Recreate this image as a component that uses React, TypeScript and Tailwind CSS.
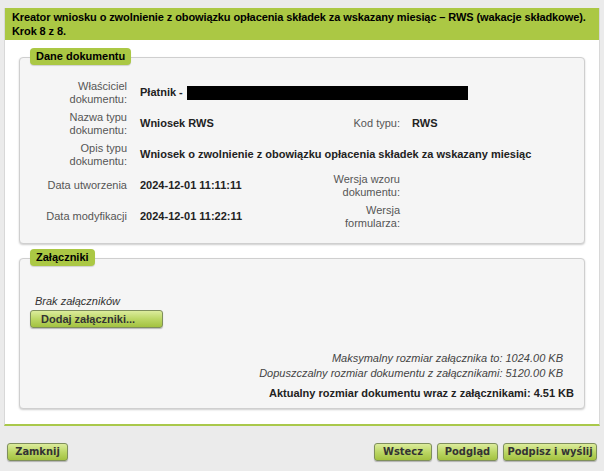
const btn =
  "h-[18px] rounded-[3px] border border-[#7f8f5c] bg-gradient-to-b from-[#dcec9c] via-[#bcd765] to-[#a3c23f] shadow-[0_1px_1px_rgba(0,0,0,0.25)] text-[11px] font-bold text-[#333] leading-[16px]";

function Legend({ children }: { children: React.ReactNode }) {
  return (
    <div className="-mt-[10px] ml-[10px] w-fit rounded-[4px] bg-[#abc844] px-[6px] h-[17px] leading-[17px] text-[11px] font-bold text-black shadow-[0_1px_1px_rgba(0,0,0,0.15)]">
      {children}
    </div>
  );
}

function Row({
  label,
  value,
  rlabel,
  rvalue,
  wide,
}: {
  label: React.ReactNode;
  value?: React.ReactNode;
  rlabel?: React.ReactNode;
  rvalue?: React.ReactNode;
  wide?: boolean;
}) {
  return (
    <div className="flex h-[31px] items-center">
      <div className="w-[107px] text-right text-[#555] leading-[13px]">{label}</div>
      <div className={`ml-[13px] font-bold text-[#222] ${wide ? "" : "w-[160px]"}`}>{value}</div>
      {!wide && (
        <>
          <div className="w-[100px] text-right text-[#555] leading-[13px]">{rlabel}</div>
          <div className="ml-[12px] font-bold text-[#222]">{rvalue}</div>
        </>
      )}
    </div>
  );
}

export default function App() {
  return (
    <div
      className="min-h-screen bg-[#ebebeb] pt-[8px] px-[4px] text-[11px] text-[#222]"
      style={{ fontFamily: '"Liberation Sans", Arial, sans-serif' }}
    >
      <div className="border-x border-[#d8d8d8] border-b-2 border-b-[#a9c84a] bg-white">
        <div className="bg-[#abc844] px-[7px] py-[2px] text-[11px] font-bold leading-[14px] tracking-[-0.1px] text-black whitespace-nowrap">
          Kreator wniosku o zwolnienie z obowiązku opłacenia składek za wskazany miesiąc – RWS (wakacje składkowe).
          <br />
          Krok 8 z 8.
        </div>

        <div className="px-[14px] pt-[17px] pb-[15px]">
          {/* Dane dokumentu */}
          <div className="rounded-[4px] border border-[#cfcfcf] bg-[#f5f5f5] pb-[11px] shadow-[0_1px_2px_rgba(0,0,0,0.2)]">
            <Legend>Dane dokumentu</Legend>
            <div className="mt-[12px]">
              <Row
                wide
                label={
                  <>
                    Właściciel
                    <br />
                    dokumentu:
                  </>
                }
                value={
                  <span className="flex items-center">
                    Płatnik -<span className="ml-[4px] inline-block h-[14px] w-[281px] bg-black" />
                  </span>
                }
              />
              <Row
                label={
                  <>
                    Nazwa typu
                    <br />
                    dokumentu:
                  </>
                }
                value="Wniosek RWS"
                rlabel="Kod typu:"
                rvalue="RWS"
              />
              <Row
                wide
                label={
                  <>
                    Opis typu
                    <br />
                    dokumentu:
                  </>
                }
                value="Wniosek o zwolnienie z obowiązku opłacenia składek za wskazany miesiąc"
              />
              <Row
                label="Data utworzenia"
                value="2024-12-01 11:11:11"
                rlabel={
                  <>
                    Wersja wzoru
                    <br />
                    dokumentu:
                  </>
                }
              />
              <Row
                label="Data modyfikacji"
                value="2024-12-01 11:22:11"
                rlabel={
                  <>
                    Wersja
                    <br />
                    formularza:
                  </>
                }
              />
            </div>
          </div>

          {/* Załączniki */}
          <div className="mt-[14px] rounded-[4px] border border-[#cfcfcf] bg-[#f5f5f5] pb-[8px] shadow-[0_1px_2px_rgba(0,0,0,0.2)]">
            <Legend>Załączniki</Legend>
            <div className="px-[10px]">
              <div className="mt-[28px] pl-[5px] italic text-[#333] leading-[14px]">Brak załączników</div>
              <button className={`${btn} mt-[2px] w-[133px] pl-[10px] text-left`}>Dodaj załączniki...</button>
              <div className="mt-[23px] pr-[11px] text-right italic leading-[15px] text-[#444]">
                Maksymalny rozmiar załącznika to: 1024.00 KB
                <br />
                Dopuszczalny rozmiar dokumentu z załącznikami: 5120.00 KB
              </div>
              <div className="mt-[5px] text-right font-bold leading-[14px] text-[#222]">
                Aktualny rozmiar dokumentu wraz z załącznikami: 4.51 KB
              </div>
            </div>
          </div>
        </div>
      </div>

      <div
        className="mt-[17px] flex items-center px-[3px]"
        style={{ fontFamily: '"DejaVu Sans Condensed", "Liberation Sans", sans-serif' }}
      >
        <button className={`${btn} w-[61px] text-[10px]`}>Zamknij</button>
        <div className="ml-auto flex gap-[5px]">
          <button className={`${btn} w-[58px] text-[10px]`}>Wstecz</button>
          <button className={`${btn} w-[61px] text-[10px]`}>Podgląd</button>
          <button className={`${btn} w-[94px] text-[10px]`}>Podpisz i wyślij</button>
        </div>
      </div>
    </div>
  );
}
